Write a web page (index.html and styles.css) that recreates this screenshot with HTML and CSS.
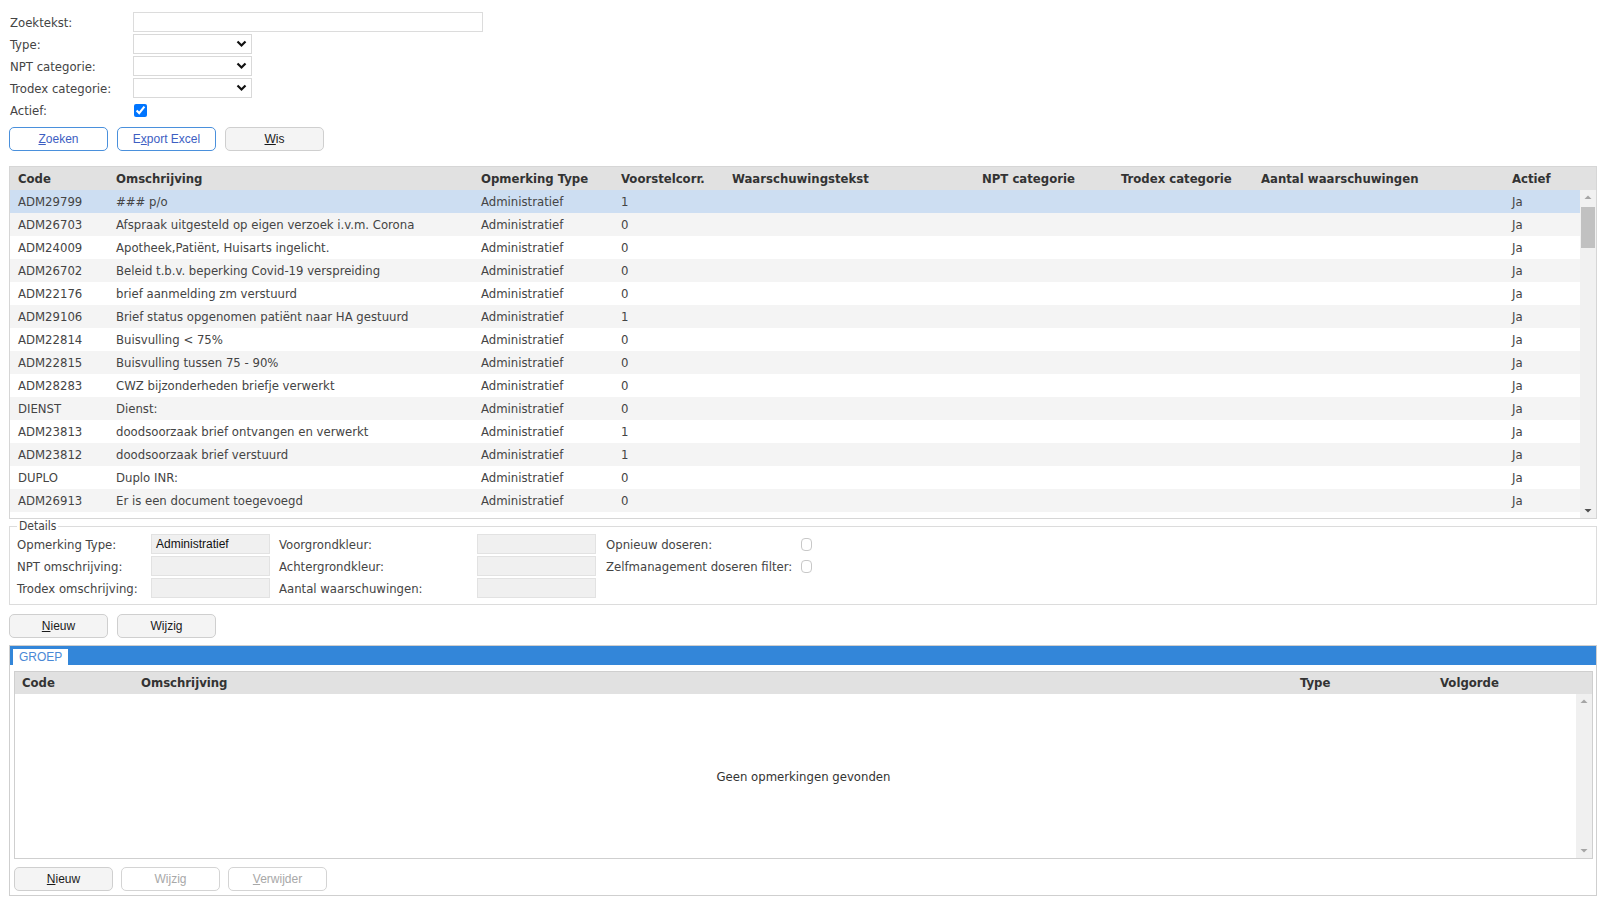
FILE: index.html
```html
<!DOCTYPE html>
<html lang="nl">
<head>
<meta charset="utf-8">
<title>Opmerkingen</title>
<link rel="stylesheet" href="styles.css">
</head>
<body>
<div class="page">
  <div class="search">
    <label class="lbl">Zoektekst:</label>
    <div class="txt"></div>
    <label class="lbl">Type:</label>
    <div class="sel"><svg width="11" height="8" viewBox="0 0 11 8"><path d="M1.5 1.5 L5.5 5.5 L9.5 1.5" fill="none" stroke="#111" stroke-width="2.2"/></svg></div>
    <label class="lbl">NPT categorie:</label>
    <div class="sel"><svg width="11" height="8" viewBox="0 0 11 8"><path d="M1.5 1.5 L5.5 5.5 L9.5 1.5" fill="none" stroke="#111" stroke-width="2.2"/></svg></div>
    <label class="lbl">Trodex categorie:</label>
    <div class="sel"><svg width="11" height="8" viewBox="0 0 11 8"><path d="M1.5 1.5 L5.5 5.5 L9.5 1.5" fill="none" stroke="#111" stroke-width="2.2"/></svg></div>
    <label class="lbl short">Actief:</label>
    <div class="short"><input type="checkbox" class="chk" checked></div>
  </div>

  <div class="btnrow top">
    <div class="btn primary"><span><u>Z</u>oeken</span></div>
    <div class="btn primary alt"><span>E<u>x</u>port Excel</span></div>
    <div class="btn"><span><u>W</u>is</span></div>
  </div>

  <div class="grid">
    <div class="thead cols">
      <div>Code</div><div>Omschrijving</div><div>Opmerking Type</div><div>Voorstelcorr.</div><div>Waarschuwingstekst</div><div>NPT categorie</div><div>Trodex categorie</div><div>Aantal waarschuwingen</div><div>Actief</div>
    </div>
    <div class="tbody">
      <div class="rows">
        <div class="row cols sel-row"><div>ADM29799</div><div>### p/o</div><div>Administratief</div><div>1</div><div></div><div></div><div></div><div></div><div>Ja</div></div>
        <div class="row cols"><div>ADM26703</div><div>Afspraak uitgesteld op eigen verzoek i.v.m. Corona</div><div>Administratief</div><div>0</div><div></div><div></div><div></div><div></div><div>Ja</div></div>
        <div class="row cols"><div>ADM24009</div><div>Apotheek,Patiënt, Huisarts ingelicht.</div><div>Administratief</div><div>0</div><div></div><div></div><div></div><div></div><div>Ja</div></div>
        <div class="row cols"><div>ADM26702</div><div>Beleid t.b.v. beperking Covid-19 verspreiding</div><div>Administratief</div><div>0</div><div></div><div></div><div></div><div></div><div>Ja</div></div>
        <div class="row cols"><div>ADM22176</div><div>brief aanmelding zm verstuurd</div><div>Administratief</div><div>0</div><div></div><div></div><div></div><div></div><div>Ja</div></div>
        <div class="row cols"><div>ADM29106</div><div>Brief status opgenomen patiënt naar HA gestuurd</div><div>Administratief</div><div>1</div><div></div><div></div><div></div><div></div><div>Ja</div></div>
        <div class="row cols"><div>ADM22814</div><div>Buisvulling &lt; 75%</div><div>Administratief</div><div>0</div><div></div><div></div><div></div><div></div><div>Ja</div></div>
        <div class="row cols"><div>ADM22815</div><div>Buisvulling tussen 75 - 90%</div><div>Administratief</div><div>0</div><div></div><div></div><div></div><div></div><div>Ja</div></div>
        <div class="row cols"><div>ADM28283</div><div>CWZ bijzonderheden briefje verwerkt</div><div>Administratief</div><div>0</div><div></div><div></div><div></div><div></div><div>Ja</div></div>
        <div class="row cols"><div>DIENST</div><div>Dienst:</div><div>Administratief</div><div>0</div><div></div><div></div><div></div><div></div><div>Ja</div></div>
        <div class="row cols"><div>ADM23813</div><div>doodsoorzaak brief ontvangen en verwerkt</div><div>Administratief</div><div>1</div><div></div><div></div><div></div><div></div><div>Ja</div></div>
        <div class="row cols"><div>ADM23812</div><div>doodsoorzaak brief verstuurd</div><div>Administratief</div><div>1</div><div></div><div></div><div></div><div></div><div>Ja</div></div>
        <div class="row cols"><div>DUPLO</div><div>Duplo INR:</div><div>Administratief</div><div>0</div><div></div><div></div><div></div><div></div><div>Ja</div></div>
        <div class="row cols"><div>ADM26913</div><div>Er is een document toegevoegd</div><div>Administratief</div><div>0</div><div></div><div></div><div></div><div></div><div>Ja</div></div>
        <div class="row cols"></div>
      </div>
      <div class="vscroll">
        <svg class="arrow" width="16" height="14" viewBox="0 0 16 14"><path d="M4.5 9 L8 5.5 L11.5 9 Z" fill="#a5a5a5"/></svg>
        <div class="thumb"></div>
        <div class="track"></div>
        <svg class="arrow" width="16" height="14" viewBox="0 0 16 14"><path d="M4.5 5 L8 8.5 L11.5 5 Z" fill="#505050"/></svg>
      </div>
    </div>
  </div>

  <fieldset class="details">
    <legend>Details</legend>
    <div class="dgrid">
      <div class="dl">Opmerking Type:</div><div class="ro">Administratief</div>
      <div class="dl c3">Voorgrondkleur:</div><div class="ro"></div>
      <div class="dl c5">Opnieuw doseren:</div><div class="cb"></div>

      <div class="dl">NPT omschrijving:</div><div class="ro"></div>
      <div class="dl c3">Achtergrondkleur:</div><div class="ro"></div>
      <div class="dl c5">Zelfmanagement doseren filter:</div><div class="cb"></div>

      <div class="dl">Trodex omschrijving:</div><div class="ro"></div>
      <div class="dl c3">Aantal waarschuwingen:</div><div class="ro"></div>
    </div>
  </fieldset>

  <div class="btnrow mid">
    <div class="btn"><span><u>N</u>ieuw</span></div>
    <div class="btn"><span>Wijzig</span></div>
  </div>

  <div class="panel">
    <div class="tabbar"><div class="tab">GROEP</div></div>
    <div class="subgrid">
      <div class="shead scols">
        <div>Code</div><div>Omschrijving</div><div>Type</div><div>Volgorde</div>
      </div>
      <div class="sbody">
        <div class="empty">Geen opmerkingen gevonden</div>
        <div class="vscroll2">
          <svg width="16" height="14" viewBox="0 0 16 14"><path d="M4.5 9 L8 5.5 L11.5 9 Z" fill="#a5a5a5"/></svg>
          <svg width="16" height="14" viewBox="0 0 16 14"><path d="M4.5 5 L8 8.5 L11.5 5 Z" fill="#a5a5a5"/></svg>
        </div>
      </div>
    </div>
    <div class="btnrow bottom">
      <div class="btn"><span><u>N</u>ieuw</span></div>
      <div class="btn disabled"><span>Wijzig</span></div>
      <div class="btn disabled"><span><u>V</u>erwijder</span></div>
    </div>
  </div>
</div>
</body>
</html>
```

FILE: styles.css
```css
html, body {
  margin: 0;
  padding: 0;
  background: #fff;
}
body {
  font-family: "DejaVu Sans Condensed", "DejaVu Sans", sans-serif;
  font-size: 13px;
  color: #444;
}
.page {
  padding: 12px 6px 0 9px;
}

/* search form */
.search {
  display: grid;
  grid-template-columns: 124px auto;
  grid-auto-rows: 20px;
  row-gap: 2px;
  align-items: center;
}
.search .lbl {
  padding-left: 1px;
  line-height: 20px;
  padding-top: 1px;
}
.search .short {
  height: 17px;
  display: flex;
  align-items: center;
}
.txt {
  width: 350px;
  height: 20px;
  box-sizing: border-box;
  border: 1px solid #dcdcdc;
}
.sel {
  width: 119px;
  height: 20px;
  box-sizing: border-box;
  border: 1px solid #d9d9d9;
  display: flex;
  align-items: center;
  justify-content: flex-end;
  padding-right: 4px;
}
.chk {
  margin: 0 0 0 1px;
  width: 13px;
  height: 13px;
  accent-color: #0075ff;
}

/* buttons */
.btnrow {
  display: flex;
  gap: 9px;
}
.btnrow.top { margin-top: 7px; }
.btnrow.mid { margin-top: 9px; }
.btnrow.bottom { margin: 8px 0 0 4px; gap: 8px; }
.btn {
  width: 99px;
  height: 24px;
  box-sizing: border-box;
  border: 1px solid #cfcfcf;
  border-radius: 5px;
  background: #f4f4f4;
  font-family: "Liberation Sans", Arial, sans-serif;
  font-size: 12px;
  color: #1a1a1a;
  display: flex;
  align-items: center;
  justify-content: center;
}
.btn.primary {
  background: #fff;
  border-color: #4a90dc;
  color: #3d5ec2;
}
.btn.disabled {
  background: #fff;
  color: #a8a8a8;
  border-color: #d4d4d4;
}

/* main grid */
.grid {
  margin-top: 15px;
  border: 1px solid #d6d6d6;
}
.cols {
  display: grid;
  grid-template-columns: 98px 365px 140px 111px 250px 139px 140px 251px 1fr;
}
.cols > div {
  padding-left: 8px;
  white-space: nowrap;
  overflow: hidden;
}
.thead {
  height: 23px;
  line-height: 23px;
  background: #e1e1e1;
  color: #333;
  font-weight: bold;
}
.tbody {
  display: flex;
  height: 328px;
}
.rows {
  flex: 1;
  overflow: hidden;
}
.row {
  height: 23px;
  line-height: 23px;
}
.row:nth-child(even) {
  background: #f4f4f4;
}
.row.sel-row {
  background: #cddef2;
}
.vscroll {
  width: 16px;
  background: #f1f1f1;
  display: flex;
  flex-direction: column;
}
.vscroll .arrow {
  display: block;
  flex: none;
}
.thumb {
  height: 41px;
  margin: 3px 1px 0 1px;
  background: #c1c1c1;
}
.track { flex: 1; }

/* details */
.details {
  margin: 0;
  padding: 1px 6px 6px 7px;
  border: 1px solid #dcdcdc;
  min-width: 0;
}
.details legend {
  padding: 0 2px;
  font-size: 12px;
  line-height: 14px;
  color: #444;
}
.dgrid {
  display: grid;
  grid-template-columns: 134px 119px 207px 119px 205px 14px;
  grid-auto-rows: 20px;
  row-gap: 2px;
  align-items: center;
}
.dl {
  white-space: nowrap;
}
.dl.c3 { padding-left: 9px; }
.dl.c5 { padding-left: 10px; }
.ro {
  height: 20px;
  box-sizing: border-box;
  background: #f0f0f0;
  border: 1px solid #e2e2e2;
  font-family: "Liberation Sans", Arial, sans-serif;
  font-size: 12px;
  color: #111;
  line-height: 18px;
  padding-left: 4px;
}
.cb {
  width: 11px;
  height: 13px;
  border: 1px solid #c8c8c8;
  border-radius: 4px;
  box-sizing: border-box;
  background: #fff;
}

/* groep panel */
.panel {
  margin-top: 7px;
  border: 1px solid #cfcfcf;
  padding-bottom: 4px;
}
.tabbar {
  height: 19px;
  background: #3386d9;
  display: flex;
  align-items: flex-end;
  padding-left: 3px;
}
.tab {
  height: 16px;
  line-height: 16px;
  padding: 0 6px;
  background: #fff;
  color: #4a89d6;
  font-family: "Liberation Sans", Arial, sans-serif;
  font-size: 12px;
}
.subgrid {
  margin: 6px 3px 0 4px;
  border: 1px solid #cfcfcf;
}
.scols {
  display: grid;
  grid-template-columns: 119px 1159px 140px 1fr;
}
.scols > div {
  padding-left: 7px;
}
.shead {
  height: 22px;
  line-height: 22px;
  background: #e1e1e1;
  color: #333;
  font-weight: bold;
}
.sbody {
  height: 164px;
  display: grid;
  grid-template-columns: 1fr 16px;
  grid-template-rows: 1fr;
}
.empty {
  grid-column: 1 / -1;
  grid-row: 1;
  align-self: center;
  justify-self: center;
  color: #333;
}
.vscroll2 {
  grid-column: 2;
  grid-row: 1;
  background: #f0f0f0;
  display: flex;
  flex-direction: column;
  justify-content: space-between;
}
.vscroll2 svg { display: block; }
```
